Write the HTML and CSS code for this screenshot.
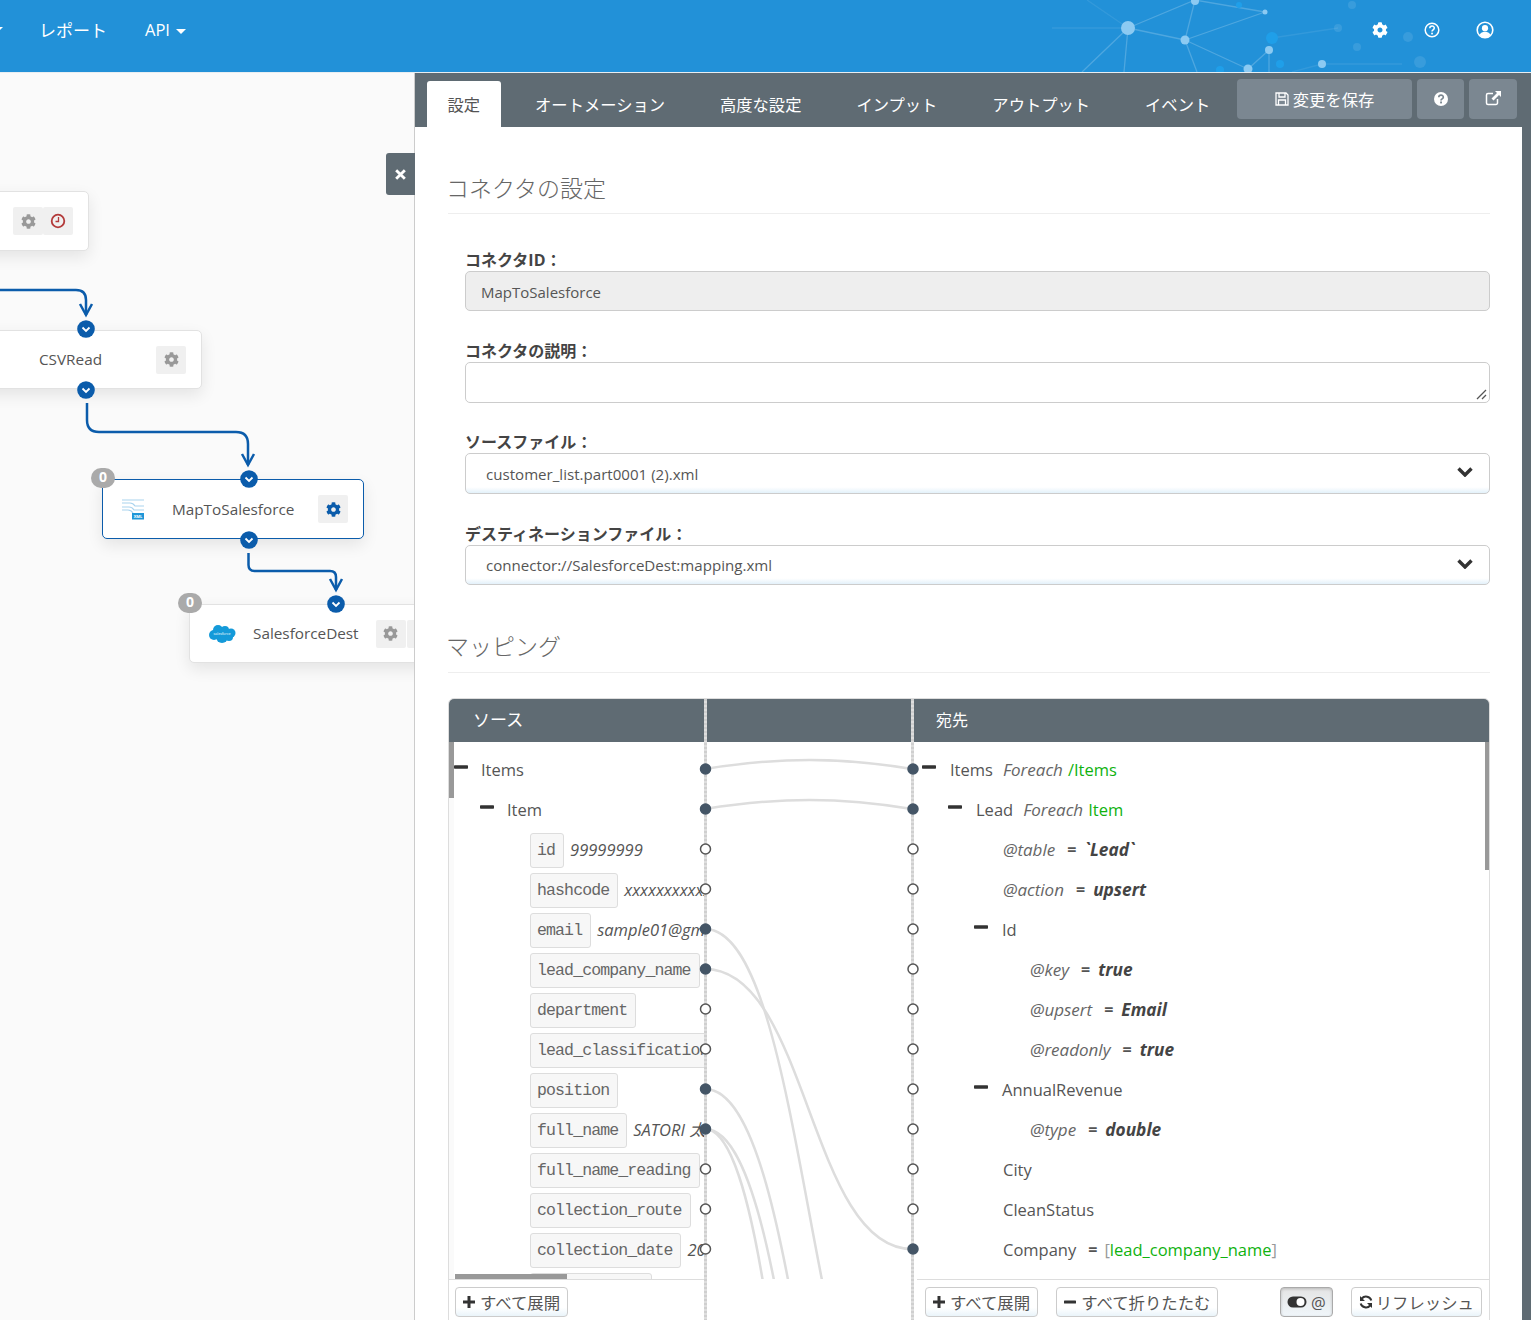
FILE: index.html
```html
<!DOCTYPE html>
<html lang="ja">
<head>
<meta charset="utf-8">
<title>MapToSalesforce</title>
<link rel="stylesheet" href="styles.css">
</head>
<body>
<svg class="defs" width="0" height="0">
  <symbol id="gear" viewBox="0 0 512 512"><path d="M487.4 315.7l-42.6-24.6c4.3-23.2 4.3-47 0-70.2l42.6-24.6c4.9-2.8 7.1-8.6 5.5-14-11.1-35.6-30-67.8-54.7-94.6-3.8-4.1-10-5.1-14.8-2.3L380.8 110c-17.9-15.4-38.5-27.3-60.8-35.1V25.8c0-5.6-3.9-10.5-9.4-11.7-36.7-8.2-74.3-7.8-109.2 0-5.5 1.2-9.4 6.1-9.4 11.7V75c-22.2 7.9-42.8 19.8-60.8 35.1L88.7 85.5c-4.9-2.8-11-1.9-14.8 2.3-24.7 26.7-43.6 58.9-54.7 94.6-1.7 5.4.6 11.2 5.5 14L67.3 221c-4.3 23.2-4.3 47 0 70.2l-42.6 24.6c-4.9 2.8-7.1 8.6-5.5 14 11.1 35.6 30 67.8 54.7 94.6 3.8 4.1 10 5.1 14.8 2.3l42.6-24.6c17.9 15.4 38.5 27.3 60.8 35.1v49.2c0 5.6 3.9 10.5 9.4 11.7 36.7 8.2 74.3 7.8 109.2 0 5.5-1.2 9.4-6.1 9.4-11.7v-49.2c22.2-7.9 42.8-19.8 60.8-35.1l42.6 24.6c4.9 2.8 11 1.9 14.8-2.3 24.7-26.7 43.6-58.9 54.7-94.6 1.5-5.5-.7-11.3-5.6-14.1zM256 336c-44.1 0-80-35.9-80-80s35.9-80 80-80 80 35.9 80 80-35.9 80-80 80z"/></symbol>
  <symbol id="plus" viewBox="0 0 12 12"><path d="M4.500 0h3v4.500h4.500v3H7.500V12h-3V7.500H0v-3h4.500z"/></symbol>
  <symbol id="minus" viewBox="0 0 12 12"><rect x="0" y="4.500" width="12" height="3" rx=".6"/></symbol>
  <symbol id="chev" viewBox="0 0 16 12"><path d="M1.500 3.500 8 10l6.500-6.500" fill="none" stroke="currentColor" stroke-width="3.400"/></symbol>
  <symbol id="port" viewBox="0 0 18 18"><circle cx="9" cy="9" r="8.800" fill="#0b5cab"/><path d="M5.500 7.500 9 11l3.500-3.500" fill="none" stroke="#fff" stroke-width="1.800"/></symbol>
</svg>
<div class="app">
  <header class="topbar">
    <svg class="network" viewBox="0 0 400 72" width="400" height="72">
      <g class="net-lines">
        <path d="M96 28 163 0M96 28l57 12M163 0l-10 40M163 0l70 12M153 40l80-28M153 40l63 29M237 50l-21 19M237 50v22M153 40l12 32M96 28l-4 44M96 28 50 72"/>
        <path class="faint" d="M96 28 55 0M96 28H20M240 38l66-10M290 64h80M290 64l-30 8"/>
      </g>
      <g class="net-bright">
        <circle cx="96" cy="28" r="7"/><circle cx="163" cy="1" r="4"/><circle cx="153" cy="40" r="4.500"/><circle cx="233" cy="12" r="2.500"/><circle cx="237" cy="50" r="4"/><circle cx="216" cy="69" r="4.500"/><circle cx="290" cy="64" r="4"/>
      </g>
      <g class="net-deep">
        <circle cx="240" cy="38" r="6"/><circle cx="248" cy="64" r="4"/><circle cx="188" cy="70" r="4"/><circle cx="207" cy="5" r="3"/>
      </g>
      <g class="net-dim">
        <circle cx="306" cy="28" r="4"/><circle cx="320" cy="5" r="4"/><circle cx="376" cy="37" r="5"/><circle cx="325" cy="47" r="4"/><circle cx="388" cy="62" r="6"/>
      </g>
    </svg>
    <nav class="nav">
      <span class="caret nav-cut"></span>
      <a class="nav-item">レポート</a>
      <a class="nav-item">API <span class="caret"></span></a>
    </nav>
    <div class="top-icons">
      <svg class="top-icon" viewBox="0 0 16 16"><use href="#gear"/></svg>
      <svg class="top-icon" viewBox="0 0 16 16"><circle cx="8" cy="8" r="6.800" fill="none" stroke="#fff" stroke-width="1.500"/><path d="M5.800 6.300c0-3 4.500-3 4.500-.2 0 1.900-2.300 1.700-2.300 3.500" fill="none" stroke="#fff" stroke-width="1.500"/><rect x="7.200" y="10.700" width="1.700" height="1.700" fill="#fff"/></svg>
      <svg class="top-icon user" viewBox="0 0 18 18"><circle cx="9" cy="9" r="7.800" fill="none" stroke="#fff" stroke-width="1.600"/><circle cx="9" cy="7.200" r="3.100" fill="#fff"/><path d="M3.500 14c1-2.500 3-3.200 5.500-3.200s4.500.7 5.500 3.200c-3 3.400-8 3.400-11 0z" fill="#fff"/></svg>
    </div>
  </header>
  <main class="main">
    <section class="canvas">
      <svg class="wires" width="414" height="1247" viewBox="0 73 414 1247">
        <g class="wire">
          <path d="M0 290H76q10 0 10 10V315"/><path d="M80 304l6 11 6-11"/>
          <path d="M87 403V420q0 12 12 12H236q12 0 12 12V465"/><path d="M242 454l6 11 6-11"/>
          <path d="M248.500 553V565q0 6 6 6H330q6 0 6 6V590"/><path d="M330 579l6 11 6-11"/>
        </g>
      </svg>
      <div class="node node-top">
        <span class="node-btn"><svg class="ico-gear"><use href="#gear"/></svg></span><span class="node-btn"><svg class="ico-clock" viewBox="0 0 16 16"><circle cx="8" cy="8" r="6.300" fill="none" stroke-width="1.800"/><path d="M8.500 4v4.500H5.500" fill="none" stroke-width="1.300"/></svg></span>
      </div>
      <svg class="port port-a"><use href="#port"/></svg>
      <div class="node node-csv">
        <span class="node-name">CSVRead</span>
        <span class="node-btn"><svg class="ico-gear"><use href="#gear"/></svg></span>
      </div>
      <svg class="port port-b"><use href="#port"/></svg>
      <div class="node node-map">
        <svg class="xml-icon" viewBox="0 0 24 22"><path d="M1 2h22M1 5h8q3 0 5 3h9M1 9h7q3 0 5 3h10M1 12h6q3 0 5 3" fill="none" stroke="#a9d3ee" stroke-width="1.200"/><rect x="11" y="15" width="12" height="6.500" fill="#1e96d8"/><text x="17" y="20" class="xml-text">XML</text></svg>
        <span class="node-name">MapToSalesforce</span>
        <span class="node-btn"><svg class="ico-gear blue"><use href="#gear"/></svg></span>
      </div>
      <span class="badge badge-map">0</span>
      <svg class="port port-c"><use href="#port"/></svg>
      <svg class="port port-d"><use href="#port"/></svg>
      <div class="node node-sf">
        <svg class="sf-icon" viewBox="0 0 28 20"><g fill="#149ad9"><circle cx="10" cy="6" r="5"/><circle cx="17" cy="6" r="4"/><circle cx="23" cy="9" r="4.500"/><circle cx="6" cy="11" r="5"/><circle cx="14" cy="13" r="6"/><circle cx="21" cy="13" r="4"/></g><text x="14" y="11" class="sf-text">salesforce</text></svg>
        <span class="node-name">SalesforceDest</span>
        <span class="node-btn"><svg class="ico-gear"><use href="#gear"/></svg></span><span class="node-btn next"></span>
      </div>
      <span class="badge badge-sf">0</span>
      <svg class="port port-e"><use href="#port"/></svg>
      <button class="close-btn" type="button"><svg class="ico-close" viewBox="0 0 12 12"><path d="M2 2l8 8M10 2l-8 8"/></svg></button>
    </section>
    <section class="panel">
      <div class="tabbar">
        <a class="tab active">設定</a>
        <a class="tab">オートメーション</a>
        <a class="tab">高度な設定</a>
        <a class="tab">インプット</a>
        <a class="tab">アウトプット</a>
        <a class="tab">イベント</a>
        <div class="tab-actions">
          <a class="tbtn save"><svg class="ico-save" viewBox="0 0 14 14"><path d="M1 1h10l2 2v10H1z M4 1v4h6V1 M3.500 13V8h7v5" fill="none" stroke="#fff" stroke-width="1.300"/></svg>変更を保存</a>
          <a class="tbtn square"><svg class="ico-16" viewBox="0 0 16 16"><circle cx="8" cy="8" r="7" fill="#fff"/><path d="M5.800 6.300c0-2.800 4.500-2.800 4.500-.1 0 1.800-2.300 1.600-2.300 3.300" fill="none" stroke="#7b8791" stroke-width="1.700"/><rect x="7.100" y="10.500" width="1.900" height="1.900" fill="#7b8791"/></svg></a>
          <a class="tbtn square"><svg class="ico-16" viewBox="0 0 16 16"><path d="M12.500 9v4a1.500 1.500 0 0 1-1.500 1.500H3A1.500 1.500 0 0 1 1.500 13V5A1.500 1.500 0 0 1 3 3.500h5" fill="none" stroke="#fff" stroke-width="1.500"/><path d="M10 1h6v6l-2-2-5.500 5.500-2-2L12 3z" fill="#fff"/></svg></a>
        </div>
      </div>
      <div class="panel-body">
        <div class="content">
          <h2 class="section-title first">コネクタの設定</h2>
          <div class="form">
            <label class="field-label">コネクタID：</label>
            <input class="control readonly" type="text" value="MapToSalesforce" readonly>
            <label class="field-label">コネクタの説明：</label>
            <div class="area-wrap">
              <textarea class="control area"></textarea>
              <svg class="grip" viewBox="0 0 11 11"><path d="M1 10 10 1M6 10l4-4"/></svg>
            </div>
            <label class="field-label">ソースファイル：</label>
            <div class="control select tall">customer_list.part0001 (2).xml<svg class="select-chev"><use href="#chev"/></svg></div>
            <label class="field-label">デスティネーションファイル：</label>
            <div class="control select">connector://SalesforceDest:mapping.xml<svg class="select-chev"><use href="#chev"/></svg></div>
          </div>
          <h2 class="section-title second">マッピング</h2>
          <div class="mapping">
            <div class="map-col source">
              <div class="map-head">ソース</div>
              <div class="map-body">
                <div class="vthumb src-thumb"></div>
                <div class="row lv0"><svg class="tree-minus"><use href="#minus"/></svg><span>Items</span></div>
                <div class="row lv1"><svg class="tree-minus"><use href="#minus"/></svg><span>Item</span></div>
                <div class="row leaf"><code class="key">id</code><i class="val">99999999</i></div>
                <div class="row leaf"><code class="key">hashcode</code><i class="val">xxxxxxxxxxxxx</i></div>
                <div class="row leaf"><code class="key">email</code><i class="val">sample01@gmail.com</i></div>
                <div class="row leaf"><code class="key">lead_company_name</code></div>
                <div class="row leaf"><code class="key">department</code></div>
                <div class="row leaf"><code class="key">lead_classification</code></div>
                <div class="row leaf"><code class="key">position</code></div>
                <div class="row leaf"><code class="key">full_name</code><i class="val">SATORI 太郎</i></div>
                <div class="row leaf"><code class="key">full_name_reading</code></div>
                <div class="row leaf"><code class="key">collection_route</code></div>
                <div class="row leaf"><code class="key">collection_date</code><i class="val">2020/01/01</i></div>
                <div class="row leaf"><span class="key stub"></span></div>
                <div class="hthumb"></div>
              </div>
              <div class="map-foot">
                <a class="btn"><svg class="ico-12"><use href="#plus"/></svg>すべて展開</a>
              </div>
            </div>
            <div class="gutter"></div>
            <div class="map-col mid">
              <div class="map-head"></div>
            </div>
            <div class="gutter"></div>
            <div class="map-col dest">
              <div class="map-head small">宛先</div>
              <div class="map-body">
                <div class="vthumb dest-thumb"></div>
                <div class="row d0"><svg class="tree-minus"><use href="#minus"/></svg><span>Items</span><i class="muted">Foreach</i><span class="green">/Items</span></div>
                <div class="row d1"><svg class="tree-minus"><use href="#minus"/></svg><span>Lead</span><i class="muted">Foreach</i><span class="green">Item</span></div>
                <div class="row d2t"><i class="muted">@table</i><b class="eq">=</b><b class="lit">`Lead`</b></div>
                <div class="row d2t"><i class="muted">@action</i><b class="eq">=</b><b class="lit">upsert</b></div>
                <div class="row d2"><svg class="tree-minus"><use href="#minus"/></svg><span>Id</span></div>
                <div class="row d3t"><i class="muted">@key</i><b class="eq">=</b><b class="lit">true</b></div>
                <div class="row d3t"><i class="muted">@upsert</i><b class="eq">=</b><b class="lit">Email</b></div>
                <div class="row d3t"><i class="muted">@readonly</i><b class="eq">=</b><b class="lit">true</b></div>
                <div class="row d2"><svg class="tree-minus"><use href="#minus"/></svg><span>AnnualRevenue</span></div>
                <div class="row d3t"><i class="muted">@type</i><b class="eq">=</b><b class="lit">double</b></div>
                <div class="row d2t"><span>City</span></div>
                <div class="row d2t"><span>CleanStatus</span></div>
                <div class="row d2t"><span>Company</span><b class="eq">=</b><span class="bracket">[<span class="green">lead_company_name</span>]</span></div>
              </div>
              <div class="map-foot dest-foot">
                <a class="btn"><svg class="ico-12"><use href="#plus"/></svg>すべて展開</a>
                <a class="btn"><svg class="ico-12"><use href="#minus"/></svg>すべて折りたたむ</a>
                <a class="btn pressed"><svg class="ico-toggle" viewBox="0 0 20 12"><rect x=".5" y=".5" width="19" height="11" rx="5.500"/><circle cx="13.500" cy="6" r="4" fill="#fff"/></svg>@</a>
                <a class="btn refresh"><svg class="ico-14" viewBox="0 0 14 14"><path d="M12.300 5.500A5.500 5.500 0 0 0 2.800 3.500M1.700 8.500a5.500 5.500 0 0 0 9.500 2" fill="none" stroke="#333" stroke-width="2"/><path d="M1 1v5h5zM13 13V8H8z" fill="#333"/></svg>リフレッシュ</a>
              </div>
            </div>
            <svg class="links" width="224" height="580" viewBox="696 699 224 580">
              <g class="curves">
                <path d="M705 769C780 757 840 757 912 769"/>
                <path d="M705 809C780 797 840 797 912 809"/>
                <path d="M705 929C808 929 809 1489 912 1489"/>
                <path d="M705 969C808 969 809 1249 912 1249"/>
                <path d="M705 1089C808 1089 809 1701 912 1701"/>
                <path d="M705 1129C808 1129 809 1868 912 1868"/>
                <path d="M705 1129C808 1129 809 2240 912 2240"/>
              </g>
              <g class="dots">
                <circle class="on" cx="705.500" cy="769" r="5"/><circle class="on" cx="913" cy="769" r="5"/>
                <circle class="on" cx="705.500" cy="809" r="5"/><circle class="on" cx="913" cy="809" r="5"/>
                <circle cx="705.500" cy="849" r="5"/><circle cx="913" cy="849" r="5"/>
                <circle cx="705.500" cy="889" r="5"/><circle cx="913" cy="889" r="5"/>
                <circle class="on" cx="705.500" cy="929" r="5"/><circle cx="913" cy="929" r="5"/>
                <circle class="on" cx="705.500" cy="969" r="5"/><circle cx="913" cy="969" r="5"/>
                <circle cx="705.500" cy="1009" r="5"/><circle cx="913" cy="1009" r="5"/>
                <circle cx="705.500" cy="1049" r="5"/><circle cx="913" cy="1049" r="5"/>
                <circle class="on" cx="705.500" cy="1089" r="5"/><circle cx="913" cy="1089" r="5"/>
                <circle class="on" cx="705.500" cy="1129" r="5"/><circle cx="913" cy="1129" r="5"/>
                <circle cx="705.500" cy="1169" r="5"/><circle cx="913" cy="1169" r="5"/>
                <circle cx="705.500" cy="1209" r="5"/><circle cx="913" cy="1209" r="5"/>
                <circle cx="705.500" cy="1249" r="5"/><circle class="on" cx="913" cy="1249" r="5"/>
              </g>
            </svg>
          </div>
        </div>
      </div>
    </section>
  </main>
</div>
</body>
</html>
```
FILE: styles.css
```css
* { box-sizing: border-box; }
html, body { margin: 0; height: 1320px; overflow: hidden; }
body {
  font-family: "Open Sans", "Noto Sans CJK JP", sans-serif;
  font-size: 15px;
  color: #555;
  background: #fff;
}
.defs { position: absolute; }
.app { display: flex; flex-direction: column; height: 1320px; }

/* top bar */
.topbar {
  position: relative;
  height: 73px;
  flex: none;
  display: flex;
  align-items: flex-start;
  justify-content: space-between;
  background: #2291d8;
  border-bottom: 1px solid #e8eef2;
  overflow: hidden;
}
.network { position: absolute; left: 1032px; top: 0; }
.net-lines path { stroke: #fff; stroke-opacity: .2; stroke-width: 1.300; fill: none; }
.net-lines path.faint { stroke-opacity: .08; }
.net-bright circle { fill: #8ccaf2; }
.net-deep circle { fill: #1f9fe9; }
.net-dim circle { fill: #fff; fill-opacity: .1; }
.nav { display: flex; align-items: center; height: 59px; margin-left: -9px; position: relative; color: #fff; }
.nav-item { color: #fff; margin-right: 37px; white-space: nowrap; font-size: 16.500px; }
.nav-item:first-of-type { font-size: 17px; margin-right: 38px; }
.nav-cut { margin-right: 36px; margin-left: 0; }
.caret {
  display: inline-block;
  width: 0;
  height: 0;
  border-left: 5px solid transparent;
  border-right: 5px solid transparent;
  border-top: 5px solid #fff;
  vertical-align: middle;
  margin-left: 2px;
}
.top-icons { display: flex; align-items: center; gap: 36px; height: 60px; padding-right: 37px; position: relative; }
.top-icon { width: 16px; height: 16px; fill: #fff; }
.top-icon.user { width: 18px; height: 18px; }

/* layout */
.main { flex: 1; display: flex; min-height: 0; }
.canvas {
  position: relative;
  width: 415px;
  flex: none;
  overflow: hidden;
  background: #fafafa;
}
.canvas::after {
  content: "";
  position: absolute;
  right: 0;
  top: 0;
  bottom: 0;
  width: 1px;
  background: #ccc;
  z-index: 4;
}
.wires { position: absolute; left: 0; top: 0; z-index: 2; }
.wire path { fill: none; stroke: #0b5cab; stroke-width: 2.500; }
.node {
  position: absolute;
  height: 60px;
  display: flex;
  align-items: center;
  background: #fff;
  border: 1px solid #e2e2e2;
  border-radius: 5px;
  box-shadow: 0 6px 16px rgba(0,0,0,.09);
  color: #555;
  font-size: 15.300px;
}
.node-top { left: -100px; top: 118px; width: 189px; justify-content: flex-end; padding-right: 15px; }
.node-csv { left: -100px; top: 257px; width: 302px; height: 59px; justify-content: flex-end; padding-right: 15px; }
.node-map { left: 102px; top: 406px; width: 262px; border-color: #0b5cab; padding-left: 18px; padding-right: 15px; }
.node-sf { left: 189px; top: 531px; width: 300px; height: 59px; padding-left: 18px; }
.node-name { white-space: nowrap; padding-bottom: 1px; }
.node-csv .node-name { margin-right: 54px; }
.node-map .node-name { margin-left: 27px; margin-right: auto; }
.node-sf .node-name { margin-left: 17px; margin-right: 17px; }
.node-btn {
  width: 30px;
  height: 28px;
  display: flex;
  align-items: center;
  justify-content: center;
  background: #f0f0f0;
  border-radius: 2px;
  flex: none;
}
.node-btn.next { margin-left: 1px; }
.ico-gear { width: 15px; height: 15px; fill: #999; }
.ico-gear.blue { fill: #0b5cab; }
.ico-clock { width: 16px; height: 16px; stroke: #b33a3a; }
.ico-close { width: 13px; height: 13px; }
.ico-close path { stroke: #fff; stroke-width: 2.600; fill: none; }
.xml-icon { width: 24px; height: 22px; flex: none; }
.xml-text { font-size: 4px; font-weight: 700; fill: #fff; text-anchor: middle; }
.sf-icon { width: 28px; height: 20px; flex: none; }
.sf-text { font-size: 3.600px; fill: #fff; text-anchor: middle; }
.port { position: absolute; width: 18px; height: 18px; z-index: 3; }
.port-a { left: 77px; top: 247px; }
.port-b { left: 77px; top: 308px; }
.port-c { left: 240px; top: 397px; }
.port-d { left: 240px; top: 458px; }
.port-e { left: 327px; top: 522px; }
.badge {
  position: absolute;
  width: 24px;
  height: 20px;
  border-radius: 10px;
  background: #aaa;
  color: #fff;
  font-size: 14px;
  font-weight: 700;
  line-height: 18px;
  text-align: center;
  z-index: 3;
}
.badge-map { left: 91px; top: 395px; }
.badge-sf { left: 178px; top: 520px; }
.close-btn {
  position: absolute;
  right: 0;
  top: 80px;
  width: 29px;
  height: 42px;
  padding: 0;
  border: 0;
  border-radius: 3px 0 0 3px;
  background: #5f6b73;
  display: flex;
  align-items: center;
  justify-content: center;
  z-index: 5;
}

/* tab bar */
.panel { flex: 1; min-width: 0; display: flex; flex-direction: column; background: #5f6b73; }
.tabbar { height: 54px; flex: none; display: flex; align-items: flex-end; gap: 14px; padding-left: 12px; position: relative; }
.tab {
  height: 46px;
  padding: 0 20.500px;
  display: flex;
  align-items: center;
  color: #fff;
  font-size: 16.300px;
  white-space: nowrap;
  border-radius: 3px 3px 0 0;
}
.tab.active { background: #fff; color: #555; }
.tab-actions { position: absolute; right: 14px; top: 6px; display: flex; gap: 5px; }
.tbtn {
  height: 40px;
  display: flex;
  align-items: center;
  justify-content: center;
  background: #7b8791;
  border-radius: 4px;
  color: #fff;
  font-size: 16.300px;
}
.tbtn.save { width: 175px; }
.tbtn.square { width: 47px; }
.tbtn.square + .tbtn.square { width: 48px; padding-bottom: 2px; }
.ico-save { width: 14px; height: 14px; margin-right: 4px; }
.ico-16 { width: 16px; height: 16px; }

/* form */
.panel-body { flex: 1; min-height: 0; padding-right: 9px; }
.content { height: 100%; background: #fff; padding: 0 32px 0 33px; overflow: hidden; }
.section-title {
  margin: 0;
  font-size: 23px;
  line-height: 30px;
  font-weight: 300;
  color: #666;
  text-indent: -2px;
  border-bottom: 1px solid #eee;
}
.section-title.first { margin-top: 46px; height: 41px; }
.section-title.second { margin-top: 34px; height: 54px; padding-top: 12px; }
.form { padding: 25px 0 0 17px; display: flex; flex-direction: column; }
.field-label { display: block; height: 22px; line-height: 22px; margin-top: 29px; font-weight: 700; color: #444; font-size: 16px; }
.field-label:first-child { margin-top: 11px; height: 21px; line-height: 21px; }
.control {
  width: 100%;
  display: block;
  height: 40px;
  border: 1px solid #ccc;
  border-radius: 5px;
  font: inherit;
  font-size: 15px;
  color: #555;
  background: #fff;
  outline: none;
}
.readonly { background: #eee; padding: 2px 15px 0; }
.area-wrap { position: relative; height: 41px; margin-bottom: -1px; }
.area { height: 41px; resize: none; }
.grip { position: absolute; right: 3px; bottom: 3px; width: 11px; height: 11px; }
.grip path { stroke: #555; stroke-width: 1.300; fill: none; }
.select {
  position: relative;
  display: flex;
  align-items: center;
  padding-left: 20px;
  font-size: 15.100px;
  background: linear-gradient(#fff 85%, #e3f1fa);
}
.select.tall { height: 41px; }
.select-chev { position: absolute; right: 16px; top: 11px; width: 16px; height: 12px; color: #333; }
.mapping {
  position: relative;
  margin-top: 25px;
  height: 640px;
  display: flex;
  border: 1px solid #ddd;
  border-radius: 6px 6px 0 0;
  overflow: hidden;
}

/* mapping */
.map-col { display: flex; flex-direction: column; min-width: 0; }
.source { width: 255px; flex: none; }
.mid { width: 204px; flex: none; }
.dest { flex: 1; }
.gutter { width: 3px; flex: none; background: repeating-linear-gradient(#cfcfcf 0 2px, #dedede 2px 4px); }
.map-head {
  height: 43px;
  flex: none;
  background: #5f6b73;
  color: #fff;
  padding: 7px 0 0 24px;
  font-size: 17px;
}
.map-head.small { padding-left: 22px; font-size: 16px; padding-top: 8px; }
.map-body { position: relative; height: 537px; flex: none; overflow: hidden; padding-top: 7px; }
.source .map-body { background: linear-gradient(90deg, #fafafa 5px, #fff 5px); }
.vthumb { position: absolute; top: 0; background: #999; }
.src-thumb { left: 0; width: 5px; height: 56px; }
.dest-thumb { right: 0; width: 4px; height: 128px; }
.hthumb { position: absolute; left: 6px; bottom: 0; width: 112px; height: 5px; background: #999; }
.row { height: 40px; display: flex; align-items: center; white-space: nowrap; color: #555; font-size: 16.500px; }
.lv0 { padding-left: 5px; }
.lv1 { padding-left: 31px; }
.leaf { padding-left: 81px; }
.tree-minus { width: 14px; height: 14px; fill: #333; flex: none; margin-right: 13px; margin-top: -5px; }
.dest .tree-minus { margin-right: 14px; }
.key {
  display: block;
  flex: none;
  height: 35px;
  margin-top: 2px;
  padding: 0 8px 0 6px;
  border: 1px solid #ddd;
  border-radius: 3px;
  background: #f7f7f7;
  font: 16.500px/33px "Liberation Mono", "Noto Sans CJK JP", monospace;
  letter-spacing: -.870px;
  color: #666;
}
.key.stub { width: 122px; }
.val { margin-left: 6px; font-size: 16.500px; color: #555; }
.d0 { padding-left: 8px; }
.d1 { padding-left: 34px; }
.d2 { padding-left: 60px; }
.d2t { padding-left: 89px; }
.d3t { padding-left: 116px; }
.muted { color: #666; margin-right: 6px; font-size: 17px; }
.d0 .muted, .d1 .muted { margin-left: 10px; margin-right: 5px; }
.green { color: #0fb20f; }
.eq { margin: 0 8px 0 6px; color: #555; font-size: 16px; }
span + .eq { margin-left: 12px; margin-right: 7px; }
.lit { font-style: italic; color: #444; font-size: 17.300px; }
.bracket { color: #999; }
.map-foot { height: 50px; flex: none; border-top: 1px solid #ddd; padding: 7px 0 0 6px; display: flex; }
.dest-foot { margin-left: 3px; padding-left: 8px; gap: 18px; padding-right: 7px; }
.btn {
  height: 30px;
  padding: 0 7px;
  display: flex;
  align-items: center;
  gap: 5px;
  border: 1px solid #ccc;
  border-radius: 4px;
  background: linear-gradient(#fff 70%, #eaf4fa);
  color: #555;
  font-size: 16.400px;
  white-space: nowrap;
}
.btn.refresh { gap: 3px; }
.pressed { background: linear-gradient(#e4e4e4, #f0f6fa); box-shadow: inset 0 1px 3px rgba(0,0,0,.2); border-color: #aaa; margin-left: auto; padding: 0 6px; gap: 4px; }
.ico-12 { width: 12px; height: 12px; fill: #333; flex: none; }
.ico-14 { width: 14px; height: 14px; flex: none; }
.ico-toggle { width: 20px; height: 12px; fill: #333; flex: none; }
.links { position: absolute; left: 247px; top: 0; pointer-events: none; }
.curves path { fill: none; stroke: #ddd; stroke-width: 2.500; }
.dots circle { fill: #fff; stroke: #555; stroke-width: 1.500; }
.dots circle.on { fill: #445566; stroke: #445566; }
```
